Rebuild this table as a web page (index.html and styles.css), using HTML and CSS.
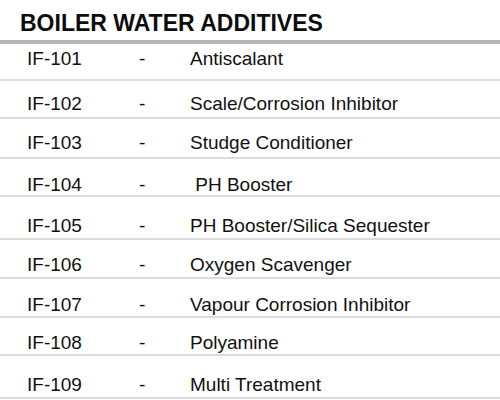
FILE: index.html
```html
<!DOCTYPE html>
<html lang="en">
<head>
<meta charset="utf-8">
<title>Boiler Water Additives</title>
<link rel="stylesheet" href="styles.css">
</head>
<body>
<h1 class="title">BOILER WATER ADDITIVES</h1>
<ul class="list">
  <li class="row"><span class="code">IF-101</span><span class="dash">-</span><span class="desc">Antiscalant</span></li>
  <li class="row"><span class="code">IF-102</span><span class="dash">-</span><span class="desc">Scale/Corrosion Inhibitor</span></li>
  <li class="row"><span class="code">IF-103</span><span class="dash">-</span><span class="desc">Studge Conditioner</span></li>
  <li class="row"><span class="code">IF-104</span><span class="dash">-</span><span class="desc">&nbsp;PH Booster</span></li>
  <li class="row"><span class="code">IF-105</span><span class="dash">-</span><span class="desc">PH Booster/Silica Sequester</span></li>
  <li class="row"><span class="code">IF-106</span><span class="dash">-</span><span class="desc">Oxygen Scavenger</span></li>
  <li class="row"><span class="code">IF-107</span><span class="dash">-</span><span class="desc">Vapour Corrosion Inhibitor</span></li>
  <li class="row"><span class="code">IF-108</span><span class="dash">-</span><span class="desc">Polyamine</span></li>
  <li class="row"><span class="code">IF-109</span><span class="dash">-</span><span class="desc">Multi Treatment</span></li>
</ul>
</body>
</html>
```
FILE: styles.css
```css
html, body {
  margin: 0;
  padding: 0;
  background: #ffffff;
}
body {
  font-family: "Liberation Sans", Arial, sans-serif;
  color: #111111;
  width: 500px;
  height: 400px;
  overflow: hidden;
}
.title {
  margin: 0;
  height: 26px;
  padding: 10px 0 4px 20px;
  font-size: 23px;
  line-height: 26px;
  font-weight: bold;
  color: #0d0d0d;
  border-bottom: 4px solid #b6b6b6;
}
.list {
  list-style: none;
  margin: 0;
  padding: 0;
}
.row {
  display: grid;
  grid-template-columns: 112px 51px 1fr;
  align-items: end;
  padding-left: 27px;
  font-size: 19px;
  line-height: 20px;
  border-bottom: 2px solid #dcdcdc;
}
.row:nth-child(1) { height: 25px; padding-bottom: 10px; }
.row:nth-child(2) { height: 33px; padding-bottom: 3px; }
.row:nth-child(3) { height: 34px; padding-bottom: 4px; }
.row:nth-child(4) { height: 36px; padding-bottom: 0; }
.row:nth-child(5) { height: 39px; padding-bottom: 2px; }
.row:nth-child(6) { height: 35px; padding-bottom: 2px; }
.row:nth-child(7) { height: 36px; padding-bottom: 1px; }
.row:nth-child(8) { height: 35px; padding-bottom: 1px; }
.row:nth-child(9) { height: 39px; padding-bottom: 2px; }
.code, .dash, .desc {
  white-space: nowrap;
}
```
